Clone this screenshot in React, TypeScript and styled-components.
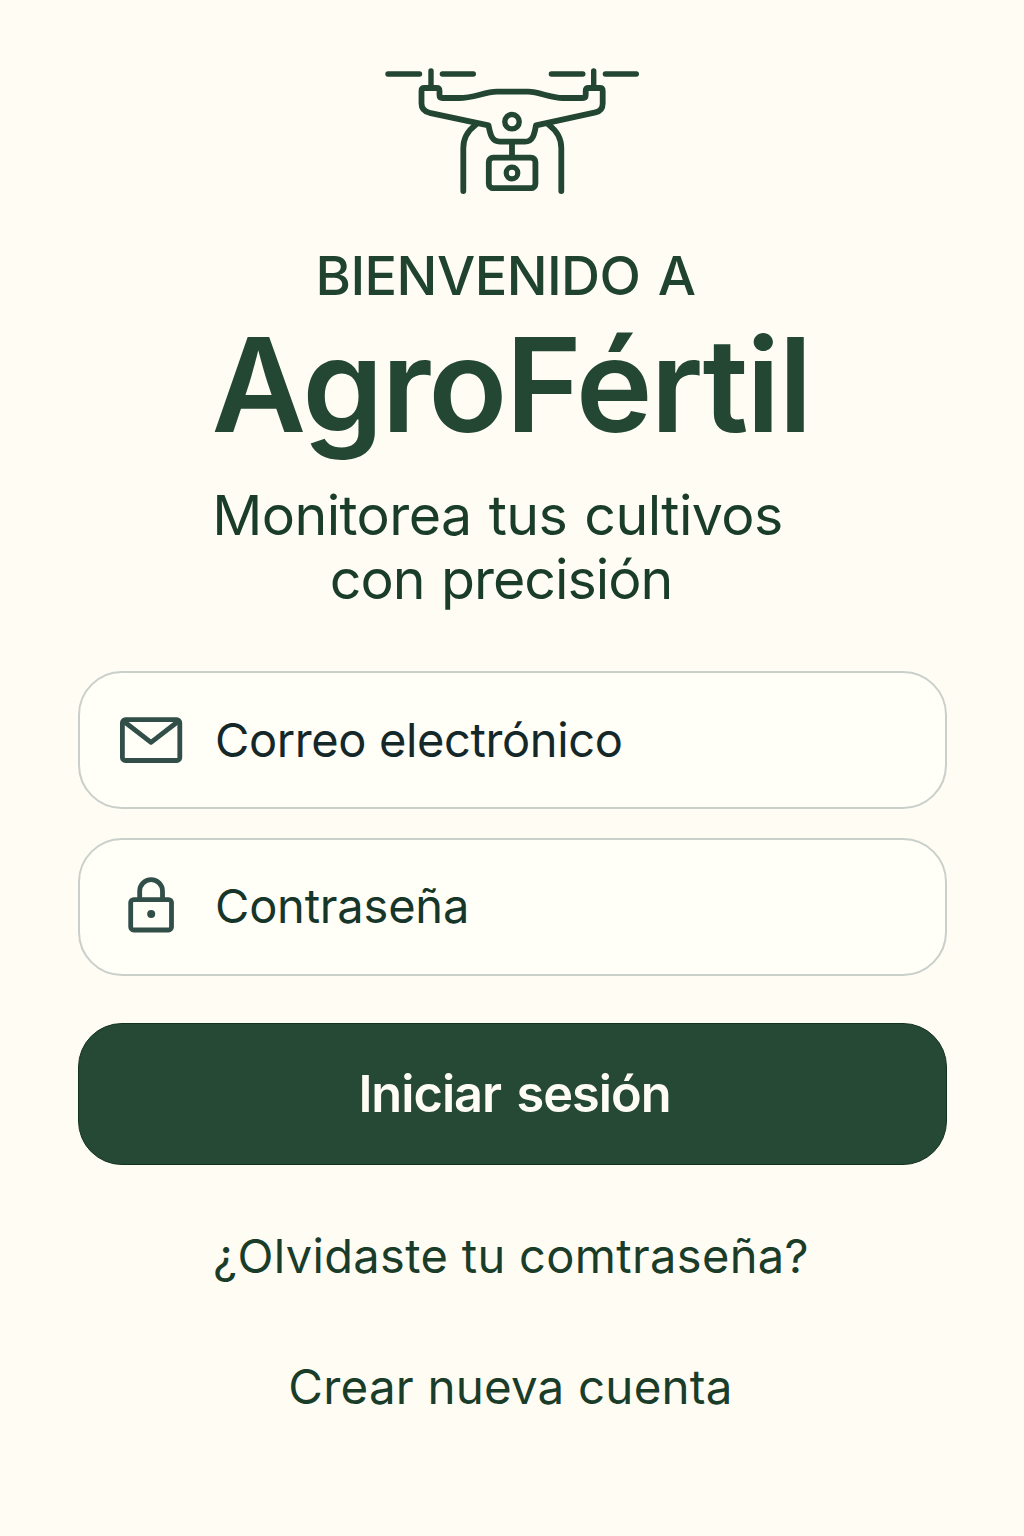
import React from "react";
import styled, { createGlobalStyle } from "styled-components";

const GlobalStyle = createGlobalStyle`
  *, *::before, *::after { box-sizing: border-box; }
  body {
    margin: 0;
    background: #fffcf4;
    font-family: Inter, "Liberation Sans", sans-serif;
  }
`;

const Screen = styled.main`
  display: flex;
  flex-direction: column;
  align-items: stretch;
  min-height: 1536px;
  width: 1024px;
  padding: 56px 77px 0 78px;
  background: #fffcf4;
  color: #1a3d2a;
`;

const Header = styled.header`
  display: flex;
  flex-direction: column;
  align-items: stretch;
  text-align: center;
`;

const DroneLogo = styled.svg`
  display: block;
  align-self: center;
  width: 272px;
  height: 150px;
  margin-right: 1px;
  fill: none;
  stroke: #224632;
  stroke-width: 5.8;
  stroke-linecap: round;
  stroke-linejoin: round;
`;

const Eyebrow = styled.p`
  margin: 40px 0 0;
  font-size: 54px;
  font-weight: 500;
  line-height: 60px;
  letter-spacing: -0.55px;
  word-spacing: 3.5px;
  text-indent: -14px;
  color: #1f432e;
`;

const Title = styled.h1`
  margin: 14px 0 0;
  font-size: 130px;
  font-weight: 600;
  line-height: 130px;
  letter-spacing: -2px;
  text-indent: -3px;
  color: #244733;
`;

const Tagline = styled.div`
  margin-top: 33px;
`;

const TaglineRow = styled.p<{ $tracking: number; $indent: number }>`
  margin: 0;
  font-size: 55.5px;
  line-height: 63.5px;
  letter-spacing: ${(p) => p.$tracking}px;
  word-spacing: 2px;
  text-indent: ${(p) => p.$indent}px;
`;

const Form = styled.form`
  display: flex;
  flex-direction: column;
  margin-top: 61px;
`;

const Fields = styled.div`
  display: flex;
  flex-direction: column;
  gap: 29px;
`;

const Field = styled.label`
  display: flex;
  align-items: center;
  height: 138px;
  padding-left: 38px;
  border: 2px solid #c9d0ca;
  border-radius: 44px;
  background: #fffef7;
`;

const FieldIcon = styled.svg`
  flex: none;
  width: 66px;
  height: 62px;
  fill: none;
  stroke: #314f48;
  stroke-width: 4.8;
  stroke-linecap: round;
  stroke-linejoin: round;
`;

const FieldLabel = styled.span<{ $color: string; $tracking: number; $lift?: number }>`
  margin-left: 31px;
  padding-bottom: ${(p) => p.$lift ?? 0}px;
  font-size: 47px;
  line-height: 60px;
  letter-spacing: ${(p) => p.$tracking}px;
  color: ${(p) => p.$color};
`;

const SubmitButton = styled.button`
  height: 142px;
  margin-top: 47px;
  padding: 0;
  border: 1px solid #12331f;
  border-radius: 44px;
  background: #264935;
  color: #fffcf4;
  font-family: inherit;
  font-size: 50.5px;
  font-weight: 560;
  line-height: 60px;
  letter-spacing: -1px;
  word-spacing: 3.5px;
  text-indent: 4px;
`;

const Links = styled.nav`
  display: flex;
  flex-direction: column;
  gap: 71px;
  margin-top: 61px;
`;

const TextLink = styled.a<{ $size: number; $tracking: number; $indent: number }>`
  font-size: ${(p) => p.$size}px;
  line-height: 60px;
  letter-spacing: ${(p) => p.$tracking}px;
  text-align: center;
  text-indent: ${(p) => p.$indent}px;
  text-decoration: none;
  white-space: nowrap;
  color: inherit;
`;

function Drone() {
  return (
    <DroneLogo viewBox="376 56 272 150" aria-hidden="true">
      <path d="M388 74H419.5M442.4 74H473.3M551.4 74H582.8M605.4 74H636.3" strokeWidth="5.4" />
      <path d="M431 71V87M593.7 71V87" strokeWidth="5.4" />
      <path d="M424.5 88H436.5Q439.5 88 439.5 91V95Q439.5 98 442.5 98H459C474 98 484 92 497 91.7H528C540 92 550 98 563 98H582.7Q585.7 98 585.7 95V91Q585.7 88 588.7 88H599.7Q602.7 88 602.7 91V103.5C602.7 109 600 111.4 595.5 112.3L536 125.3C534.5 134 533 141.7 525 141.7H500C491.5 141.7 490.2 134 488.5 125.3L429.5 112.8C424.5 111.5 421.5 108.5 421.5 103.5V91Q421.5 88 424.5 88Z" />
      <path d="M475.5 125C467.5 131 463.3 138.5 463.3 148V191M549 125C557 131 561.3 138.5 561.3 148V191" />
      <path d="M512 143V156" />
      <rect x="488.8" y="157.6" width="46.6" height="30.6" rx="4.5" />
      <circle cx="512" cy="121.7" r="7.2" strokeWidth="5.4" />
      <circle cx="512" cy="173" r="5.8" strokeWidth="5.2" />
    </DroneLogo>
  );
}

function MailIcon() {
  return (
    <FieldIcon viewBox="118 709 66 62" aria-hidden="true">
      <rect x="122.4" y="719.7" width="57.4" height="40.8" rx="3" />
      <path d="M124 721.5L151 742.3L178 721.5" />
    </FieldIcon>
  );
}

function LockIcon() {
  return (
    <FieldIcon viewBox="118 876 66 62" aria-hidden="true">
      <rect x="130.7" y="899.6" width="40.8" height="30.4" rx="3" />
      <path d="M139.7 899V891A11.4 11.4 0 0 1 162.5 891V899" />
      <circle cx="151.2" cy="914" r="4" fill="#314f48" stroke="none" />
    </FieldIcon>
  );
}

export default function App() {
  return (
    <Screen>
      <GlobalStyle />
      <Header>
        <Drone />
        <Eyebrow>BIENVENIDO A</Eyebrow>
        <Title>AgroFértil</Title>
        <Tagline>
          <TaglineRow $tracking={-0.57} $indent={-30}>Monitorea tus cultivos</TaglineRow>
          <TaglineRow $tracking={-1} $indent={-23}>con precisión</TaglineRow>
        </Tagline>
      </Header>
      <Form onSubmit={(e) => e.preventDefault()}>
        <Fields>
          <Field>
            <MailIcon />
            <FieldLabel $color="#14282a" $tracking={-0.38}>Correo electrónico</FieldLabel>
          </Field>
          <Field>
            <LockIcon />
            <FieldLabel $color="#17362a" $tracking={-0.2} $lift={2}>Contraseña</FieldLabel>
          </Field>
        </Fields>
        <SubmitButton type="submit">Iniciar sesión</SubmitButton>
      </Form>
      <Links>
        <TextLink href="#" $size={47} $tracking={0.34} $indent={-3}>¿Olvidaste tu comtraseña?</TextLink>
        <TextLink href="#" $size={47.5} $tracking={0.2} $indent={-4}>Crear nueva cuenta</TextLink>
      </Links>
    </Screen>
  );
}
